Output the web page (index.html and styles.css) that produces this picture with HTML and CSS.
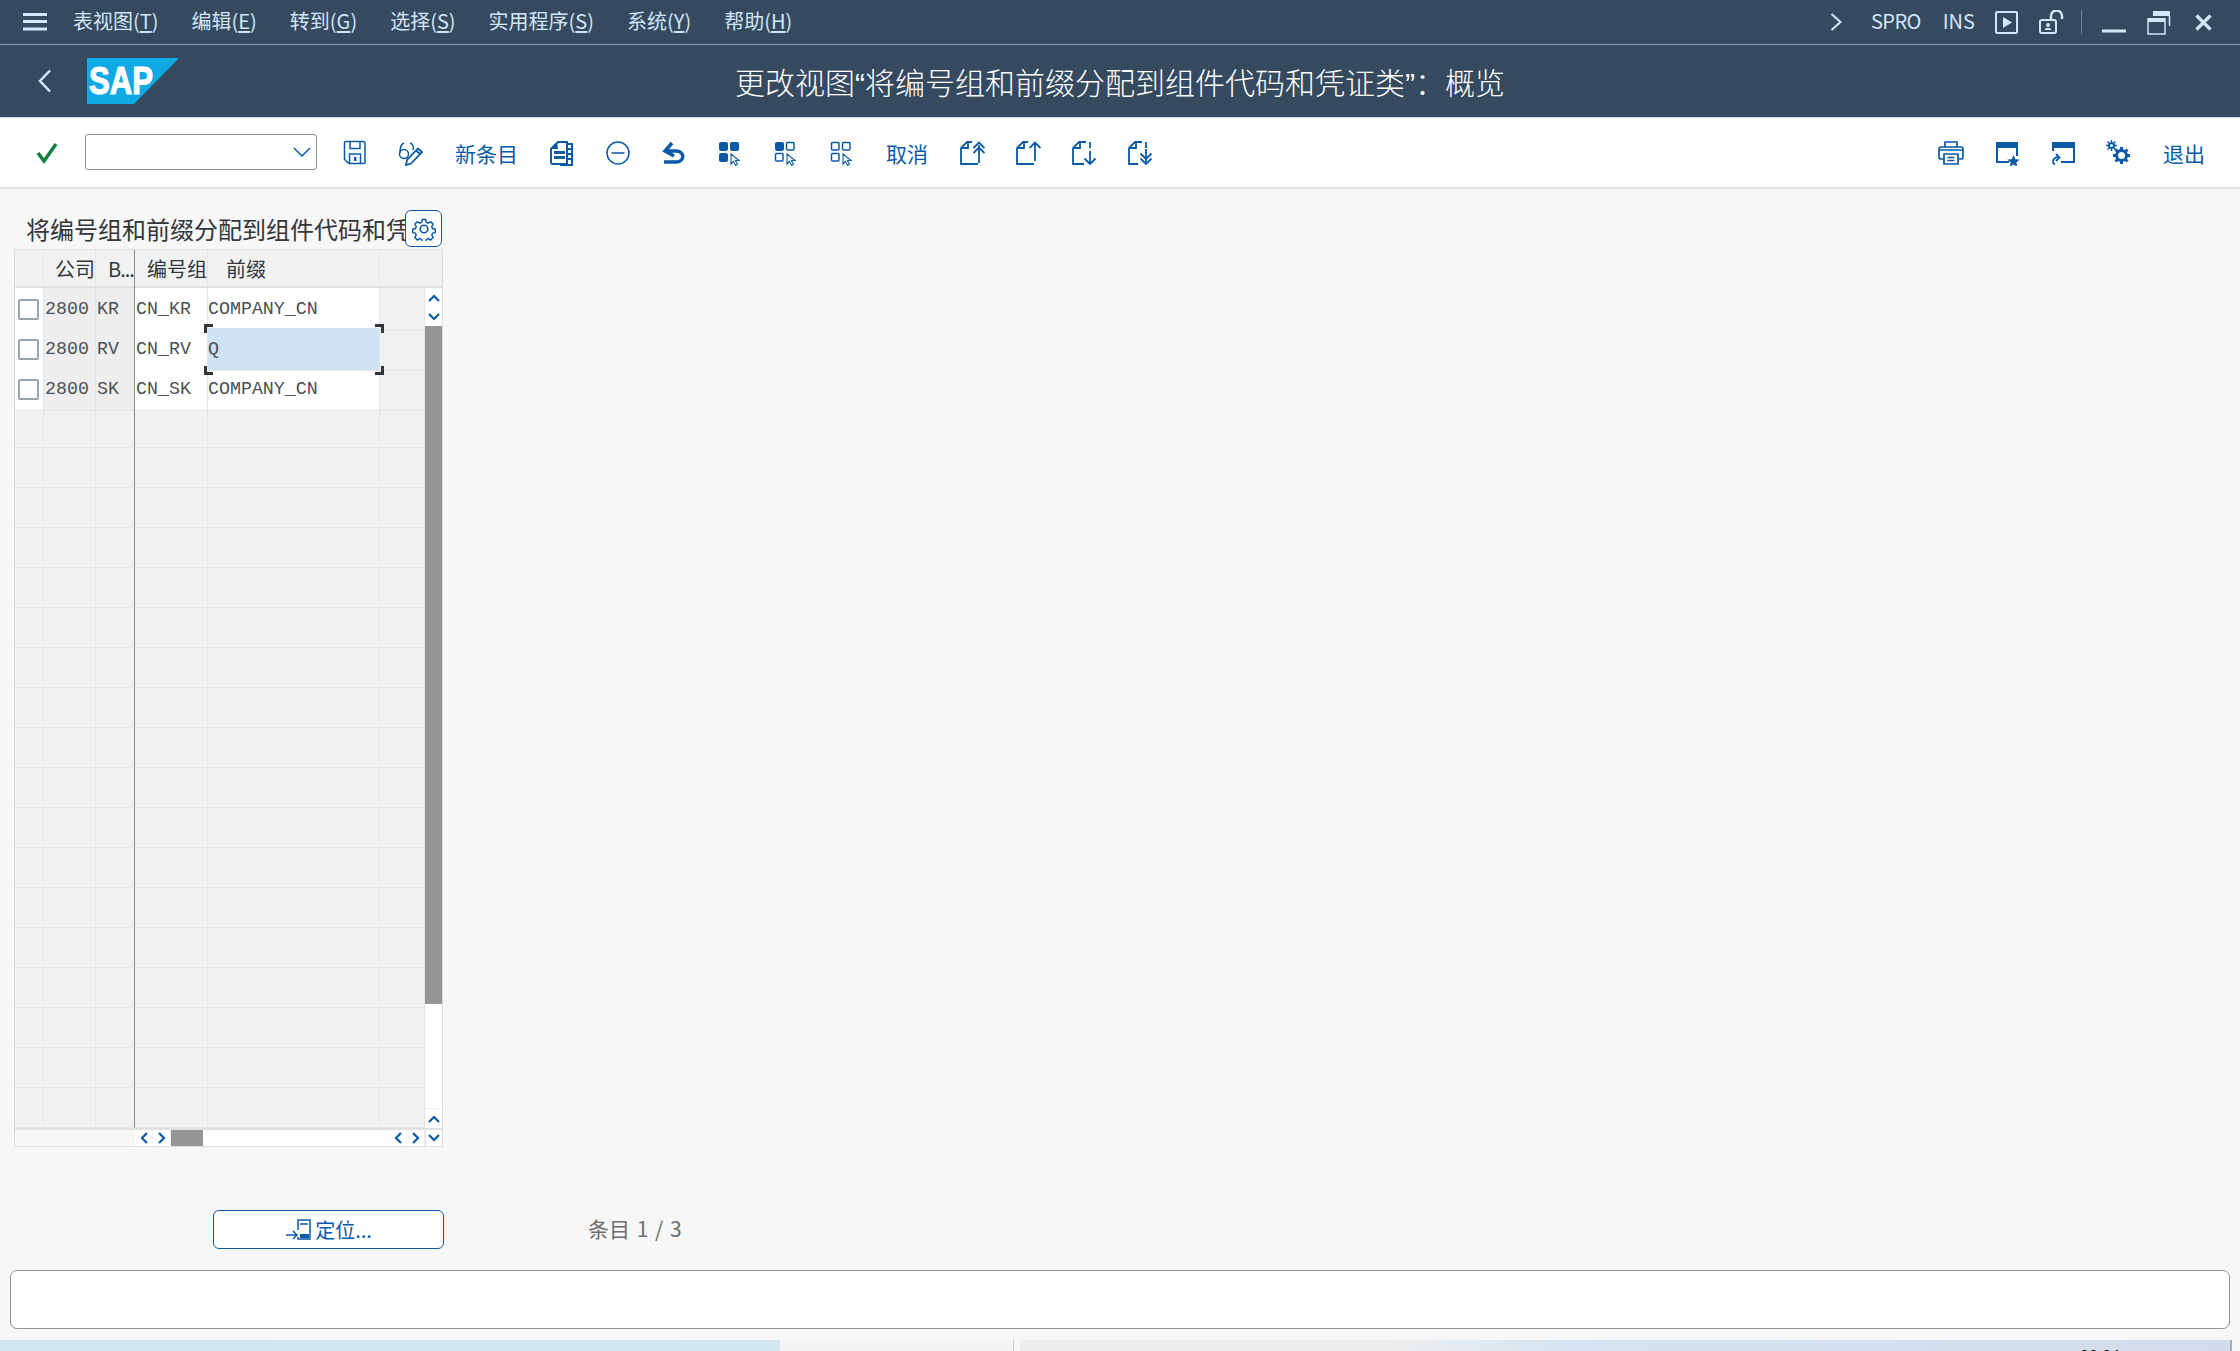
FILE: index.html
```html
<!DOCTYPE html>
<html lang="zh-CN">
  <head>
    <meta charset="UTF-8" />
    <title>更改视图“将编号组和前缀分配到组件代码和凭证类”：概览</title>
    <link rel="stylesheet" href="styles.css">
  </head>
  <body>
    <div class="menubar">
      <svg class="hamburger" width="24" height="18" viewBox="0 0 24 18"><path d="M0 1.5h24M0 8.5h24M0 16h24" /></svg>
      <div class="menu">
        <span>表视图(<u>T</u>)</span>
        <span>编辑(<u>E</u>)</span>
        <span>转到(<u>G</u>)</span>
        <span>选择(<u>S</u>)</span>
        <span>实用程序(<u>S</u>)</span>
        <span>系统(<u>Y</u>)</span>
        <span>帮助(<u>H</u>)</span>
      </div>
      <div class="sysbar">
        <svg class="sys chev" width="12" height="18" viewBox="0 0 12 18"><path d="M1.5 1l9 8-9 8" /></svg>
        <span class="sys-text spro">SPRO</span>
        <span class="sys-text ins">INS</span>
        <svg class="sys play" width="23" height="23" viewBox="0 0 23 23"><rect x="1" y="1" width="21" height="21" rx="1" /><path class="fill" d="M8 6l9 5.5-9 5.5z" /></svg>
        <svg class="sys lock" width="25" height="24" viewBox="0 0 25 24"><rect x="1" y="10" width="16" height="13" rx="2" /><path d="M12 10V6a5 5 0 0 1 11 0v3" stroke-width="2.5" /><circle class="fill" cx="9" cy="15" r="2" /><path class="fill" d="M5.5 20c.5-3 6.5-3 7 0z" /></svg>
        <span class="sys-sep"></span>
        <svg class="sys min" width="24" height="4" viewBox="0 0 24 4"><path d="M0 2h24" stroke-width="3" /></svg>
        <svg class="sys restore" width="24" height="25" viewBox="0 0 24 25"><path class="fill" d="M6 1h17v5H6z" /><path d="M22.5 6v10M1 9h17v15H1z" stroke-width="1.5" /><path class="fill" d="M1 8h17v4H1z" /></svg>
        <svg class="sys close" width="17" height="17" viewBox="0 0 17 17"><path d="M1.5 1.5l14 14M15.5 1.5l-14 14" stroke-width="3.2" /></svg>
      </div>
    </div>

    <div class="titlebar">
      <svg class="back" width="14" height="24" viewBox="0 0 14 24"><path d="M12 1.5L2 12l10 10.5" /></svg>
      <svg class="logo" width="92" height="46" viewBox="0 0 92 46">
        <path d="M0 0h92L47 46H0z" fill="#0faae3" />
        <text x="2" y="36" textLength="64" lengthAdjust="spacingAndGlyphs">SAP</text>
      </svg>
      <h1 class="page-title">更改视图“将编号组和前缀分配到组件代码和凭证类”：概览</h1>
    </div>

    <div class="toolbar">
      <button class="tb-btn"><svg width="22" height="22" viewBox="0 0 22 22"><path class="ok" d="M2 11l6 8L20 2" /></svg></button>
      <div class="combo"><svg width="18" height="10" viewBox="0 0 18 10"><path d="M1 1l8 8 8-8" /></svg></div>
      <button class="tb-btn first"><svg width="24" height="25" viewBox="0 0 24 25"><path d="M3 1.5h17a2 2 0 0 1 2 2v19a1 1 0 0 1-1 1H6l-4.5-4V3a1.5 1.5 0 0 1 1.5-1.5zM7 1.5v7h10v-7M6.5 23.5V14h11v9.5" /><path class="f" d="M11 17h2.5v4H11z" /></svg></button>
      <button class="tb-btn"><svg width="26" height="26" viewBox="0 0 26 26"><circle cx="6" cy="14" r="4.5" /><path d="M2 13c0-5 1-9 4-10M15 10c1-3 0-6-3-7" /><path d="M8 25l1-5L20 8.5l4 3.5L13 23.5zM18 10.5l4 3.5" stroke-width="1.8" /></svg></button>
      <button class="tb-text">新条目</button>
      <button class="tb-btn"><svg width="26" height="26" viewBox="0 0 26 26"><path d="M9 2h9v22H4a2 2 0 0 1-2-2V9zM18 4h5v21H11" stroke-width="2" /><path class="f" d="M8 2l1 7H2zM5 11h11v3H5zM5 16h11v3H5zM19 8h4v2h-4zM19 13h4v2h-4zM19 18h4v2h-4z" /></svg></button>
      <button class="tb-btn"><svg width="24" height="24" viewBox="0 0 24 24"><circle cx="12" cy="12" r="11" /><path d="M5.5 12h13" /></svg></button>
      <button class="tb-btn"><svg width="24" height="24" viewBox="0 0 24 24"><path class="thick" d="M10 2L3 10l9 5M3 10h11c9 0 9 11 0 11H2" /></svg></button>
      <button class="tb-btn"><svg width="26" height="26" viewBox="0 0 26 26"><rect class="f" x="2" y="2" width="9" height="9" rx="2" /><rect class="f" x="13" y="2" width="9" height="9" rx="2" /><rect class="f" x="2" y="13" width="9" height="9" rx="2" /><path class="cursor" d="M14 14v10l2.5-2.5 2 4 2-1-2-4H22z" /></svg></button>
      <button class="tb-btn"><svg width="26" height="26" viewBox="0 0 26 26"><rect class="f" x="2" y="2" width="9" height="9" rx="2" /><rect x="13.5" y="2.5" width="7.5" height="7.5" rx="1" /><rect x="2.5" y="13.5" width="7.5" height="7.5" rx="1" /><path class="cursor" d="M14 14v10l2.5-2.5 2 4 2-1-2-4H22z" /></svg></button>
      <button class="tb-btn"><svg width="26" height="26" viewBox="0 0 26 26"><rect x="2.5" y="2.5" width="7.5" height="7.5" rx="1" /><rect x="13.5" y="2.5" width="7.5" height="7.5" rx="1" /><rect x="2.5" y="13.5" width="7.5" height="7.5" rx="1" /><path class="cursor" d="M14 14v10l2.5-2.5 2 4 2-1-2-4H22z" /></svg></button>
      <button class="tb-text narrow">取消</button>
      <button class="tb-btn"><svg width="26" height="26" viewBox="0 0 26 26"><path d="M13 2H8L2 8v16h16v-1M9 2v6H3" stroke-width="1.8" /><path d="M20 23V5M14.5 8L20 2.5 25.5 8M14.5 13L20 7.5 25.5 13" stroke-width="1.8" /></svg></button>
      <button class="tb-btn"><svg width="26" height="26" viewBox="0 0 26 26"><path d="M13 2H8L2 8v16h16v-1M9 2v6H3" stroke-width="1.8" /><path d="M20 21V3M14.5 8L20 2.5 25.5 8" stroke-width="1.8" /></svg></button>
      <button class="tb-btn"><svg width="26" height="26" viewBox="0 0 26 26"><path d="M15 2H8L2 8v16h11M9 2v6H3M19 2v6" stroke-width="1.8" /><path d="M19 11v13M13.5 18.5L19 24l5.5-5.5" stroke-width="1.8" /></svg></button>
      <button class="tb-btn"><svg width="26" height="26" viewBox="0 0 26 26"><path d="M15 2H8L2 8v16h9M9 2v6H3M19 2v6" stroke-width="1.8" /><path d="M19 9v13M13.5 13.5L19 19l5.5-5.5M13.5 18.5L19 24l5.5-5.5" stroke-width="1.8" /></svg></button>

      <div class="toolbar-right">
        <button class="tb-btn"><svg width="26" height="26" viewBox="0 0 26 26"><path d="M7 7V2h12v5M6 19H3a2 2 0 0 1-2-2V9a2 2 0 0 1 2-2h20a2 2 0 0 1 2 2v8a2 2 0 0 1-2 2h-3M6 14h14v10H6zM9.5 17.5h7M9.5 20.5h7M1 10h24" stroke-width="1.7" /></svg></button>
        <button class="tb-btn"><svg width="26" height="26" viewBox="0 0 26 26"><path class="f" d="M2 2h21v6H2z" /><path d="M3 2v20h12M23 2v14" stroke-width="2" /><path class="f" d="M19.5 15l1.8 4.2 4.4.3-3.4 2.9 1.1 4.4-3.9-2.4-3.9 2.4 1.1-4.4-3.4-2.9 4.4-.3z" /></svg></button>
        <button class="tb-btn"><svg width="26" height="26" viewBox="0 0 26 26"><path class="f" d="M2 2h22v6H2z" /><path d="M3 2v9M24 2v20H11" stroke-width="2" /><path d="M9 17.5a4.5 4.5 0 0 0-6 4c0 1.5.8 2.5 2 3M6 14l3.5 3.5L6 21" stroke-width="1.8" /></svg></button>
        <button class="tb-btn"><svg width="26" height="26" viewBox="0 0 26 26"><circle cx="15.5" cy="15.5" r="5" stroke-width="3" /><path d="M15.5 7v3M15.5 21v3M7 15.5h3M21 15.5h3M9.5 9.5l2 2M19.5 19.5l2 2M21.5 9.5l-2 2M11.5 19.5l-2 2" stroke-width="3" /><circle cx="5.5" cy="5.5" r="2.5" stroke-width="2" /><path d="M5.5 0v2M5.5 9v2M0 5.5h2M9 5.5h2M1.5 1.5L3 3M8 8l1.5 1.5M9.5 1.5L8 3M3 8L1.5 9.5" stroke-width="1.5" /></svg></button>
        <button class="tb-text exit">退出</button>
      </div>
    </div>

    <div class="content">
      <div class="tbl-head">
        <h2 class="tbl-title">将编号组和前缀分配到组件代码和凭证类</h2>
        <button class="gear"><svg width="24" height="24" viewBox="0 0 24 24"><circle cx="12" cy="12" r="3.8" /><path d="M10 1.5h4l.6 3 2.2 1 2.6-1.6 2.8 2.8-1.6 2.6 1 2.2 2.9.5v4l-2.9.6-1 2.2 1.6 2.6-2.8 2.8-2.6-1.6-2.2 1-.6 2.9h-4l-.6-2.9-2.2-1-2.6 1.6-2.8-2.8 1.6-2.6-1-2.2-2.9-.6v-4l2.9-.5 1-2.2-1.6-2.6 2.8-2.8 2.6 1.6 2.2-1z" transform="translate(1.2 1.2) scale(.9)" /></svg></button>
      </div>

      <div class="tbl">
        <div class="row head">
          <span class="cell"></span>
          <span class="cell right">公司</span>
          <span class="cell bk">B...</span>
          <span class="cell right">编号组</span>
          <span class="cell pre">前缀</span>
          <span class="cell last"></span>
        </div>
        <div class="tbl-body">
          <div class="rows">
            <div class="row data">
              <span class="cell sel"><i class="check"></i></span><span class="cell key">2800</span><span class="cell key">KR</span>
              <span class="cell val">CN_KR</span><span class="cell val tight">COMPANY_CN</span><span class="cell"></span>
            </div>
            <div class="row data">
              <span class="cell sel"><i class="check"></i></span><span class="cell key">2800</span><span class="cell key">RV</span>
              <span class="cell val">CN_RV</span>
              <span class="cell val tight focus">Q<b class="corner tl"></b><b class="corner tr"></b><b class="corner bl"></b><b class="corner br"></b></span>
              <span class="cell"></span>
            </div>
            <div class="row data">
              <span class="cell sel"><i class="check"></i></span><span class="cell key">2800</span><span class="cell key">SK</span>
              <span class="cell val">CN_SK</span><span class="cell val tight">COMPANY_CN</span><span class="cell"></span>
            </div>
            <!-- 18 empty rows -->
            <div class="row"><span class="cell"></span><span class="cell"></span><span class="cell"></span><span class="cell"></span><span class="cell"></span><span class="cell"></span></div>
            <div class="row"><span class="cell"></span><span class="cell"></span><span class="cell"></span><span class="cell"></span><span class="cell"></span><span class="cell"></span></div>
            <div class="row"><span class="cell"></span><span class="cell"></span><span class="cell"></span><span class="cell"></span><span class="cell"></span><span class="cell"></span></div>
            <div class="row"><span class="cell"></span><span class="cell"></span><span class="cell"></span><span class="cell"></span><span class="cell"></span><span class="cell"></span></div>
            <div class="row"><span class="cell"></span><span class="cell"></span><span class="cell"></span><span class="cell"></span><span class="cell"></span><span class="cell"></span></div>
            <div class="row"><span class="cell"></span><span class="cell"></span><span class="cell"></span><span class="cell"></span><span class="cell"></span><span class="cell"></span></div>
            <div class="row"><span class="cell"></span><span class="cell"></span><span class="cell"></span><span class="cell"></span><span class="cell"></span><span class="cell"></span></div>
            <div class="row"><span class="cell"></span><span class="cell"></span><span class="cell"></span><span class="cell"></span><span class="cell"></span><span class="cell"></span></div>
            <div class="row"><span class="cell"></span><span class="cell"></span><span class="cell"></span><span class="cell"></span><span class="cell"></span><span class="cell"></span></div>
            <div class="row"><span class="cell"></span><span class="cell"></span><span class="cell"></span><span class="cell"></span><span class="cell"></span><span class="cell"></span></div>
            <div class="row"><span class="cell"></span><span class="cell"></span><span class="cell"></span><span class="cell"></span><span class="cell"></span><span class="cell"></span></div>
            <div class="row"><span class="cell"></span><span class="cell"></span><span class="cell"></span><span class="cell"></span><span class="cell"></span><span class="cell"></span></div>
            <div class="row"><span class="cell"></span><span class="cell"></span><span class="cell"></span><span class="cell"></span><span class="cell"></span><span class="cell"></span></div>
            <div class="row"><span class="cell"></span><span class="cell"></span><span class="cell"></span><span class="cell"></span><span class="cell"></span><span class="cell"></span></div>
            <div class="row"><span class="cell"></span><span class="cell"></span><span class="cell"></span><span class="cell"></span><span class="cell"></span><span class="cell"></span></div>
            <div class="row"><span class="cell"></span><span class="cell"></span><span class="cell"></span><span class="cell"></span><span class="cell"></span><span class="cell"></span></div>
            <div class="row"><span class="cell"></span><span class="cell"></span><span class="cell"></span><span class="cell"></span><span class="cell"></span><span class="cell"></span></div>
            <div class="row"><span class="cell"></span><span class="cell"></span><span class="cell"></span><span class="cell"></span><span class="cell"></span><span class="cell"></span></div>
          </div>
          <div class="vscroll">
            <span class="sb-btn"><svg width="12" height="8" viewBox="0 0 12 8"><path d="M1 7l5-5 5 5" /></svg></span>
            <span class="sb-btn"><svg width="12" height="8" viewBox="0 0 12 8"><path d="M1 1l5 5 5-5" /></svg></span>
            <span class="v-thumb"></span>
            <span class="v-track"></span>
            <span class="sb-btn"><svg width="12" height="8" viewBox="0 0 12 8"><path d="M1 7l5-5 5 5" /></svg></span>
          </div>
        </div>
        <div class="hbar">
          <span class="h-fixed"></span>
          <span class="sb-btn h"><svg width="8" height="12" viewBox="0 0 8 12"><path d="M7 1L2 6l5 5" /></svg></span>
          <span class="sb-btn h"><svg width="8" height="12" viewBox="0 0 8 12"><path d="M1 1l5 5-5 5" /></svg></span>
          <span class="h-thumb"></span>
          <span class="h-track"></span>
          <span class="sb-btn h"><svg width="8" height="12" viewBox="0 0 8 12"><path d="M7 1L2 6l5 5" /></svg></span>
          <span class="sb-btn h"><svg width="8" height="12" viewBox="0 0 8 12"><path d="M1 1l5 5-5 5" /></svg></span>
          <span class="sb-btn corner-btn"><svg width="12" height="8" viewBox="0 0 12 8"><path d="M1 1l5 5 5-5" /></svg></span>
        </div>
      </div>

      <div class="pos-row">
        <button class="pos-btn">
          <svg width="26" height="24" viewBox="0 0 26 24"><path d="M13 12V2h12v19H13v-2" /><path d="M15 6h8" /><path class="f" d="M15 16h9v4h-9z" /><path d="M1 17h11M8 13l4 4-4 4" /></svg>
          定位...
        </button>
        <span class="entry-count">条目 1 / 3</span>
      </div>

      <div class="message"></div>
    </div>

    <div class="statusbar">
      <span class="st-left"></span>
      <span class="st-mid"></span>
      <span class="st-right"><span class="st-time">00:04</span></span>
    </div>
  </body>
</html>
```

FILE: styles.css
```css
* {
  box-sizing: border-box;
  padding: 0;
  margin: 0;
}

body {
  margin: 0;
  width: 2240px;
  height: 1351px;
  overflow: hidden;
  display: flex;
  flex-direction: column;
  font-family: "Noto Sans CJK SC", "Noto Sans", sans-serif;
  color: #32363a;
  background-color: #f7f7f7;
}

svg {
  display: block;
  fill: none;
  flex: none;
}

button {
  font: inherit;
  background: none;
  border: none;
  color: #0a5aa8;
}

/* top bars */
.menubar {
  flex: none;
  height: 45px;
  display: flex;
  align-items: center;
  padding-left: 23px;
  background-color: #354a5f;
  border-bottom: 1px solid #7e9bbd;
  color: #d3e5f8;
  font-size: 20px;
}

.hamburger {
  stroke: #d3e8ff;
  stroke-width: 3;
}

.menu {
  display: flex;
  gap: 33px;
  margin-left: 26px;
  margin-bottom: 3px;
}

.menu u {
  text-underline-offset: 2px;
}

.sysbar {
  margin-left: auto;
  display: flex;
  align-items: center;
}

.sys {
  stroke: #d3e5f8;
  stroke-width: 2;
}

.sys .fill {
  fill: #d3e5f8;
  stroke: none;
}

.sys-text {
  margin-bottom: 3px;
}

.spro { margin-left: 29px; letter-spacing: -0.6px; }
.ins { margin-left: 22px; }
.play { margin-left: 20px; }
.lock { margin-left: 21px; }

.sys-sep {
  width: 1px;
  height: 24px;
  margin-left: 17px;
  background-color: #6d8299;
}

.min { margin-left: 20px; margin-top: 17px; }
.restore { margin-left: 21px; }
.close { margin-left: 24px; margin-right: 28px; }

.titlebar {
  flex: none;
  position: relative;
  height: 72px;
  display: flex;
  align-items: center;
  padding-left: 38px;
  background-color: #354a5f;
}

.back {
  stroke: #d3e8ff;
  stroke-width: 2.5;
}

.logo {
  margin-left: 35px;
}

.logo text {
  font-family: "Liberation Sans", sans-serif;
  font-weight: bold;
  font-size: 39px;
  fill: #fff;
  stroke: #fff;
  stroke-width: 1.2;
}

.page-title {
  position: absolute;
  left: 0;
  right: 0;
  text-align: center;
  font-family: "Liberation Sans", "Noto Sans CJK SC", sans-serif;
  font-size: 30px;
  font-weight: 300;
  color: #fff;
}

.toolbar {
  flex: none;
  height: 72px;
  display: flex;
  align-items: center;
  padding-left: 19px;
  background-color: #fff;
  border-top: 1px solid #d9d9d9;
  border-bottom: 2px solid #e2e2e2;
}

.tb-btn {
  width: 56px;
  height: 40px;
  display: flex;
  align-items: center;
  justify-content: center;
}

.tb-btn svg {
  stroke: #0a5aa8;
  stroke-width: 1.5;
}

.tb-btn .f {
  fill: #0a5aa8;
  stroke: none;
}

.tb-btn .ok {
  stroke: #107e3e;
  stroke-width: 3.5;
}

.tb-btn .thick {
  stroke-width: 3.5;
}

.tb-btn .cursor {
  fill: #fff;
  stroke-width: 1.1;
}

.tb-btn.first {
  margin-left: 10px;
}

.tb-text {
  width: 95px;
  height: 40px;
  font-size: 21px;
}

.tb-text.narrow {
  width: 74px;
}

.tb-text.exit {
  width: 42px;
  margin-left: 16px;
  margin-right: 35px;
}

.toolbar-right {
  margin-left: auto;
  display: flex;
  align-items: center;
}

.combo {
  width: 232px;
  height: 36px;
  margin-left: 10px;
  margin-bottom: 2px;
  display: flex;
  align-items: center;
  justify-content: flex-end;
  padding-right: 5px;
  background-color: #fff;
  border: 1px solid #89919a;
  border-radius: 3px;
}

.combo svg {
  stroke: #0a5aa8;
  stroke-width: 1.5;
}

/* main area */
.content {
  flex: 1;
  padding-top: 21px;
}

.tbl-head {
  width: 429px;
  height: 39px;
  margin-left: 14px;
  display: flex;
}

.tbl-title {
  width: 391px;
  padding-left: 12px;
  overflow: hidden;
  white-space: nowrap;
  font-size: 24px;
  line-height: 38px;
  font-weight: normal;
}

.gear {
  width: 37px;
  height: 37px;
  display: flex;
  align-items: center;
  justify-content: center;
  background-color: #fff;
  border: 1.5px solid #0a5aa8;
  border-radius: 6px;
}

.gear svg {
  stroke: #0a5aa8;
  stroke-width: 1.6;
}

.tbl {
  width: 429px;
  margin-left: 14px;
  border: 1px solid #dcdcdc;
  border-top: 1px solid #e0e0e0;
}

.row {
  display: grid;
  grid-template-columns: 29px 52px 39px 73px 172px 45px;
  height: 40px;
  background-color: #f2f2f2;
}

.row.head {
  grid-template-columns: 29px 52px 39px 73px 172px 62px;
  height: 38px;
  border-bottom: 2px solid #e0e0e0;
  font-size: 20px;
  line-height: 38px;
}

.cell {
  position: relative;
  height: 100%;
  border-right: 1px solid #e5e5e5;
  border-bottom: 1px solid #e5e5e5;
  white-space: nowrap;
}

.row.head .cell {
  border-bottom: none;
}

.cell:nth-child(3) {
  border-right: 1px solid #8c8c8c;
}

.right {
  text-align: right;
}

.row.head .bk {
  padding-left: 12px;
  letter-spacing: -1px;
}

.row.head .pre {
  padding-left: 18px;
}

.row.head .last {
  border-right: none;
}

.row.data {
  font-family: "Liberation Mono", monospace;
  font-size: 18.3px;
  line-height: 42px;
  color: #4a5157;
}

.sel, .val {
  background-color: #fff;
}

.key {
  background-color: #eeeeee;
  padding-left: 1px;
}

.val {
  padding-left: 1px;
}

.val.tight {
  padding-left: 0;
}

.sel {
  display: flex;
  align-items: center;
  justify-content: center;
}

.check {
  width: 21px;
  height: 21px;
  margin-right: 1px;
  background-color: #fff;
  border: 2px solid #98a3ad;
  border-radius: 2px;
}

.focus {
  z-index: 1;
  background-color: #d0e3f4;
}

.corner {
  position: absolute;
  width: 9px;
  height: 9px;
  border: 0 solid #32363a;
}

.corner.tl { left: -4px; top: -4px; border-width: 3px 0 0 3px; }
.corner.tr { right: -5px; top: -4px; border-width: 3px 3px 0 0; }
.corner.bl { left: -4px; bottom: -5px; border-width: 0 0 3px 3px; }
.corner.br { right: -5px; bottom: -5px; border-width: 0 3px 3px 0; }

.tbl-body {
  display: flex;
}

.rows {
  width: 410px;
}

.vscroll {
  width: 17px;
  display: flex;
  flex-direction: column;
  background-color: #fff;
}

.sb-btn {
  display: flex;
  align-items: center;
  justify-content: center;
  width: 17px;
  height: 19px;
  background-color: #fff;
}

.sb-btn svg {
  stroke: #0a5aa8;
  stroke-width: 2.2;
}

.v-thumb {
  height: 678px;
  background-color: #969696;
}

.v-track {
  height: 105px;
  border-bottom: 1px solid #eeeeee;
}

.hbar {
  display: flex;
  height: 18px;
  border-top: 2px solid #e0e0e0;
  background-color: #fff;
}

.h-fixed {
  width: 120px;
  background-color: #f7f7f7;
}

.sb-btn.h {
  width: 18px;
  height: 100%;
  border-right: 1px solid #f0f0f0;
}

.h-thumb {
  width: 32px;
  background-color: #969696;
}

.h-track {
  width: 186px;
}

.corner-btn {
  height: 100%;
  border-left: 1px solid #e0e0e0;
}

.pos-row {
  display: flex;
  align-items: center;
  margin-top: 63px;
  margin-left: 213px;
}

.pos-btn {
  width: 231px;
  height: 39px;
  display: flex;
  align-items: center;
  justify-content: center;
  gap: 4px;
  font-size: 20px;
  background-color: #fff;
  border: 1.5px solid #0a5aa8;
  border-radius: 6px;
}

.pos-btn svg {
  stroke: #0a5aa8;
  stroke-width: 1.5;
}

.pos-btn .f {
  fill: #0a5aa8;
  stroke: none;
}

.entry-count {
  margin-left: 144px;
  margin-bottom: 3px;
  font-size: 21px;
  word-spacing: 2px;
  color: #6a6d70;
}

.message {
  width: 2220px;
  height: 59px;
  margin-top: 21px;
  margin-left: 10px;
  background-color: #fff;
  border: 1.5px solid #89919a;
  border-radius: 7px;
}

/* bottom strip, only its top few pixels are on the screen */
.statusbar {
  flex: none;
  height: 11px;
  display: flex;
  overflow: hidden;
}

.st-left {
  width: 780px;
  background: linear-gradient(to right, #cfe6ee, #d2e8f0);
}

.st-mid {
  width: 234px;
  background-color: #f5f5f5;
  border-right: 1px solid #c8c8c8;
}

.st-right {
  margin-left: 6px;
  width: 1212px;
  padding-left: 1060px;
  font-size: 16px;
  line-height: 30px;
  color: #111;
  background: linear-gradient(to right, #eeeeee 30%, #d5e4f0 45%, #d3dcea 100%);
  border-right: 2px solid #a6acb3;
}
```
